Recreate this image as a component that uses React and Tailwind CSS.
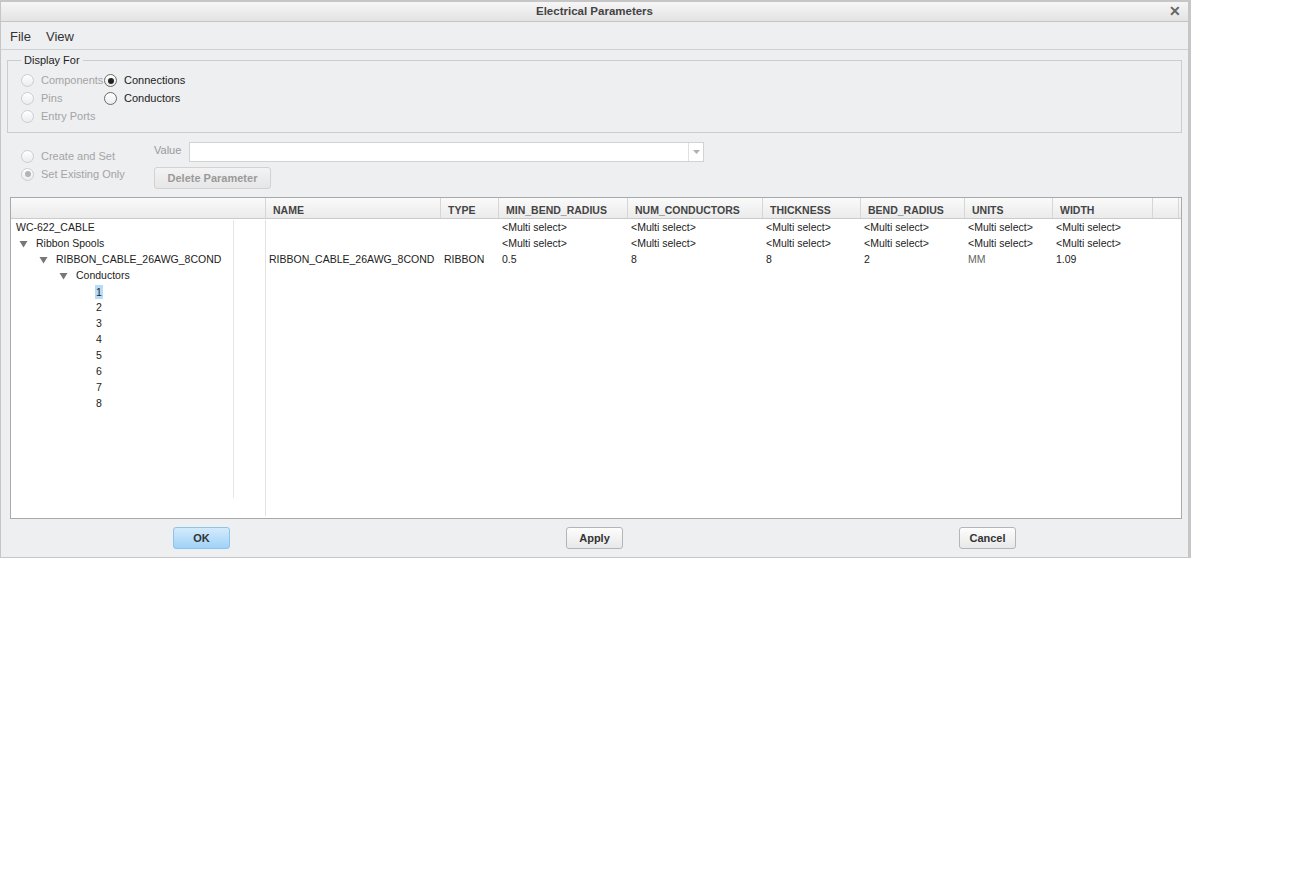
import React from 'react';

const font = { fontFamily: '"Liberation Sans", Arial, sans-serif' };

const Radio = ({ checked, disabled }) => (
  <span
    className={`flex h-[13px] w-[13px] shrink-0 items-center justify-center rounded-full border bg-gradient-to-b from-white to-[#ececec] ${
      disabled ? 'border-[#cdcdcd]' : 'border-[#6a6a6a]'
    }`}
  >
    {checked && (
      <span className={`h-[6px] w-[6px] rounded-full ${disabled ? 'bg-[#b4b4b4]' : 'bg-[#222]'}`}></span>
    )}
  </span>
);

const RadioItem = ({ label, checked, disabled, width }) => (
  <div className={`flex h-[18px] items-center gap-[7px] ${width}`}>
    <Radio checked={checked} disabled={disabled} />
    <span className={`text-[11px] ${disabled ? 'text-[#a4a4a4]' : 'text-[#222]'}`}>{label}</span>
  </div>
);

const Tri = () => (
  <svg width="9" height="8" viewBox="0 0 9 8" className="shrink-0">
    <path d="M0.5 1 L8.5 1 L4.5 7.5 Z" fill="#777" />
  </svg>
);

const columns = [
  { key: 'name', label: 'NAME', w: 'w-[175px]' },
  { key: 'type', label: 'TYPE', w: 'w-[58px]' },
  { key: 'minBend', label: 'MIN_BEND_RADIUS', w: 'w-[129px]' },
  { key: 'numCond', label: 'NUM_CONDUCTORS', w: 'w-[135px]' },
  { key: 'thick', label: 'THICKNESS', w: 'w-[98px]' },
  { key: 'bend', label: 'BEND_RADIUS', w: 'w-[104px]' },
  { key: 'units', label: 'UNITS', w: 'w-[88px]' },
  { key: 'width', label: 'WIDTH', w: 'w-[100px]' },
];

const MS = '<Multi select>';

const rows = [
  { level: 0, label: 'WC-622_CABLE', data: { minBend: MS, numCond: MS, thick: MS, bend: MS, units: MS, width: MS } },
  { level: 1, label: 'Ribbon Spools', open: true, data: { minBend: MS, numCond: MS, thick: MS, bend: MS, units: MS, width: MS } },
  {
    level: 2,
    label: 'RIBBON_CABLE_26AWG_8COND',
    open: true,
    data: { name: 'RIBBON_CABLE_26AWG_8COND', type: 'RIBBON', minBend: '0.5', numCond: '8', thick: '8', bend: '2', units: 'MM', width: '1.09' },
  },
  { level: 3, label: 'Conductors', open: true, data: {} },
  ...['1', '2', '3', '4', '5', '6', '7', '8'].map((n, i) => ({ level: 4, label: n, selected: i === 0, data: {} })),
];

const indent = ['pl-[5px]', 'pl-[8px]', 'pl-[28px]', 'pl-[48px]', 'pl-[84px]'];

const Button = ({ children, primary, disabled, className = '' }) => (
  <button
    className={`h-[22px] rounded-[3px] border text-[11px] font-bold ${
      primary
        ? 'border-[#8fc3ea] bg-gradient-to-b from-[#d3ebfc] to-[#9fd2f6] text-[#333]'
        : disabled
        ? 'border-[#d2d2d2] bg-gradient-to-b from-[#f3f3f3] to-[#e6e6e6] text-[#9a9a9a]'
        : 'border-[#b5b5b5] bg-gradient-to-b from-[#fdfdfd] to-[#e8e8e8] text-[#333]'
    } ${className}`}
  >
    {children}
  </button>
);

export default function App() {
  return (
    <div className="min-h-[877px] w-full bg-white" style={font}>
      <div className="flex h-[558px] w-[1191px] flex-col border-l border-r-[3px] border-t-2 border-b border-[#c6c6c6] bg-[#eeeff1]">
        {/* title bar */}
        <div className="relative flex h-[20px] shrink-0 items-center justify-center border-b border-[#c4c4c4] bg-gradient-to-b from-[#f6f6f6] to-[#e3e3e3]">
          <span className="text-[11.5px] font-bold text-[#444]">Electrical Parameters</span>
          <span className="absolute right-[7px] top-[1px] text-[14px] font-bold leading-[16px] text-[#666]">✕</span>
        </div>

        {/* menu */}
        <div className="flex h-[28px] shrink-0 items-center gap-[15px] border-b border-[#cfd0d2] pl-[9px] pt-[2px] text-[13px] text-[#333]">
          <span>File</span>
          <span>View</span>
        </div>

        {/* display for */}
        <fieldset className="mx-[6px] mt-[2px] h-[81px] shrink-0 border border-[#cbcccd] px-[13px] pb-0 pt-0">
          <legend className="px-[3px] text-[11px] text-[#222]">Display For</legend>
          <div className="mt-[3px] flex">
            <div className="flex flex-col">
              <RadioItem label="Components" disabled width="w-[83px]" />
              <RadioItem label="Pins" disabled width="w-[83px]" />
              <RadioItem label="Entry Ports" disabled width="w-[83px]" />
            </div>
            <div className="flex flex-col">
              <RadioItem label="Connections" checked />
              <RadioItem label="Conductors" />
            </div>
          </div>
        </fieldset>

        {/* parameter controls */}
        <div className="mt-[9px] flex shrink-0 pl-[20px]">
          <div className="flex w-[133px] flex-col pt-[5px]">
            <RadioItem label="Create and Set" disabled />
            <RadioItem label="Set Existing Only" checked disabled />
          </div>
          <div className="flex flex-col gap-[5px]">
            <div className="flex h-[20px] items-center">
              <span className="w-[35px] pb-[3px] text-[11px] text-[#9a9a9a]">Value</span>
              <div className="flex h-[20px] w-[515px] border border-[#d3d3d3] bg-white">
                <div className="flex-1"></div>
                <div className="flex w-[15px] items-center justify-center border-l border-[#e0e0e0]">
                  <svg width="7" height="4" viewBox="0 0 7 4">
                    <path d="M0 0 L7 0 L3.5 4 Z" fill="#b0b0b0" />
                  </svg>
                </div>
              </div>
            </div>
            <Button disabled className="w-[117px]">Delete Parameter</Button>
          </div>
        </div>

        {/* table */}
        <div className="ml-[9px] mt-[8px] flex h-[322px] w-[1172px] shrink-0 flex-col border border-[#a9a9a9] bg-white">
          <div className="flex h-[21px] shrink-0 border-b border-[#cacaca] bg-gradient-to-b from-[#fafafa] to-[#ebebeb]">
            <div className="w-[255px] border-r border-[#d6d6d6]"></div>
            {columns.map((c) => (
              <div
                key={c.key}
                className={`${c.w} flex items-center border-r border-[#d6d6d6] pl-[7px] pt-[5px] text-[10.5px] font-bold text-[#444]`}
              >
                {c.label}
              </div>
            ))}
            <div className="w-[26px] border-r border-[#d6d6d6]"></div>
          </div>
          <div className="flex flex-1 pt-[1px]">
            <div className="mb-[2px] flex w-[255px] border-r border-[#e2e2e2]">
              <div className="flex w-[222px] flex-col">
                {rows.map((r, i) => (
                  <div key={i} className={`flex h-[16px] items-center gap-[8px] ${indent[r.level]} text-[10.5px] text-[#222]`}>
                    {r.open && <Tri />}
                    {r.selected ? (
                      <span className="bg-[#b7dcf8] px-[1px] leading-[14px]">{r.label}</span>
                    ) : (
                      <span className={r.level === 4 ? 'px-[1px]' : ''}>{r.label}</span>
                    )}
                  </div>
                ))}
              </div>
              <div className="mb-[18px] w-px bg-[#e6e6e6]"></div>
            </div>
            <div className="flex flex-col">
              {rows.slice(0, 3).map((r, i) => (
                <div key={i} className="flex h-[16px] items-center text-[10.5px] text-[#222]">
                  {columns.map((c) => (
                    <div
                      key={c.key}
                      className={`${c.w} pl-[3px] ${r.data[c.key] === 'MM' ? 'text-[#666]' : ''}`}
                    >
                      {r.data[c.key] || ''}
                    </div>
                  ))}
                </div>
              ))}
            </div>
          </div>
        </div>

        {/* buttons */}
        <div className="mt-[8px] grid grid-cols-3 px-[4px]">
          <div className="flex justify-center">
            <Button primary className="w-[57px]">OK</Button>
          </div>
          <div className="flex justify-center">
            <Button className="w-[57px]">Apply</Button>
          </div>
          <div className="flex justify-center">
            <Button className="w-[57px]">Cancel</Button>
          </div>
        </div>
      </div>
    </div>
  );
}
